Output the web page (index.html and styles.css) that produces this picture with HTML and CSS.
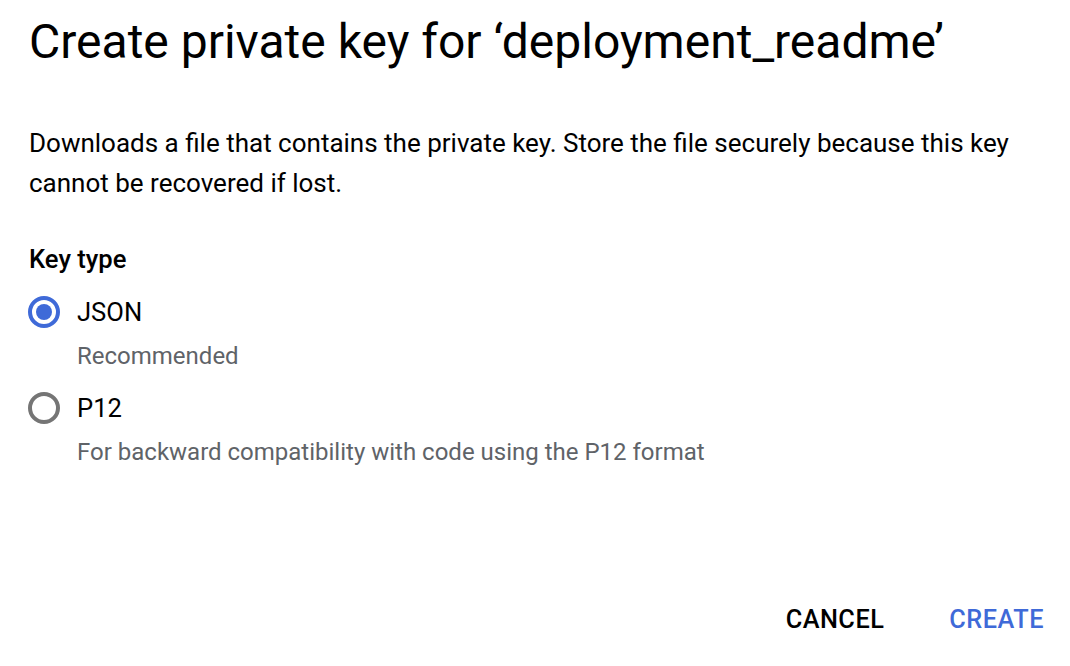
FILE: index.html
```html
<!DOCTYPE html>
<html>
<head>
<meta charset="utf-8">
<link rel="stylesheet" href="styles.css">
</head>
<body>
<div class="dialog">
  <h1 class="title">Create private key for ‘deployment_readme’</h1>
  <p class="desc">Downloads a file that contains the private key. Store the file securely because this key cannot be recovered if lost.</p>
  <div class="group">
    <div class="group-label">Key type</div>
    <div class="option">
      <div class="radio-row">
        <span class="radio checked"></span>
        <span class="opt-label">JSON</span>
      </div>
      <div class="hint">Recommended</div>
    </div>
    <div class="option">
      <div class="radio-row">
        <span class="radio"></span>
        <span class="opt-label">P12</span>
      </div>
      <div class="hint">For backward compatibility with code using the P12 format</div>
    </div>
  </div>
  <div class="actions">
    <button class="btn btn-cancel">CANCEL</button>
    <button class="btn btn-create">CREATE</button>
  </div>
</div>
</body>
</html>
```

FILE: styles.css
```css
html, body {
  margin: 0;
  padding: 0;
  background: #fff;
}
body {
  font-family: Roboto, "Noto Sans", Arial, sans-serif;
  color: #000;
}
.dialog {
  width: 1070px;
  height: 666px;
  box-sizing: border-box;
  padding: 14px 26px 0 29px;
  display: flex;
  flex-direction: column;
}
.title {
  margin: 0;
  font-size: 48px;
  font-weight: 400;
  line-height: 56px;
  color: #000;
  white-space: nowrap;
}
.desc {
  margin: 53px 0 0 0;
  font-size: 26px;
  line-height: 40px;
  color: #000;
  max-width: 1000px;
}
.group {
  margin-top: 40px;
  display: flex;
  flex-direction: column;
}
.group-label {
  font-size: 25.6px;
  font-weight: 500;
  line-height: 32px;
  color: #000;
  margin-bottom: 5px;
}
.option {
  display: flex;
  flex-direction: column;
}
.radio-row {
  display: flex;
  align-items: center;
  gap: 17px;
  height: 48px;
  margin-top: 8px;
}
.radio {
  width: 32px;
  height: 32px;
  margin-left: -1px;
  box-sizing: border-box;
  border-radius: 50%;
  border: 4px solid #757575;
  display: flex;
  align-items: center;
  justify-content: center;
}
.radio.checked {
  border-color: #3f6ad8;
}
.radio.checked::after {
  content: "";
  width: 16px;
  height: 16px;
  border-radius: 50%;
  background: #3f6ad8;
}
.opt-label {
  font-size: 25.6px;
  color: #000;
}
.hint {
  margin-left: 48px;
  font-size: 24px;
  line-height: 40px;
  color: #5f6368;
}
.actions {
  margin-top: auto;
  margin-bottom: 26px;
  display: flex;
  justify-content: flex-end;
  gap: 65px;
}
.btn {
  border: none;
  background: none;
  padding: 0;
  font-family: Roboto, "Noto Sans", Arial, sans-serif;
  font-size: 25.3px;
  font-weight: 500;
  letter-spacing: 0.5px;
  line-height: 40px;
  cursor: pointer;
}
.btn-cancel {
  color: #000;
}
.btn-create {
  color: #3f6ad8;
}
```
